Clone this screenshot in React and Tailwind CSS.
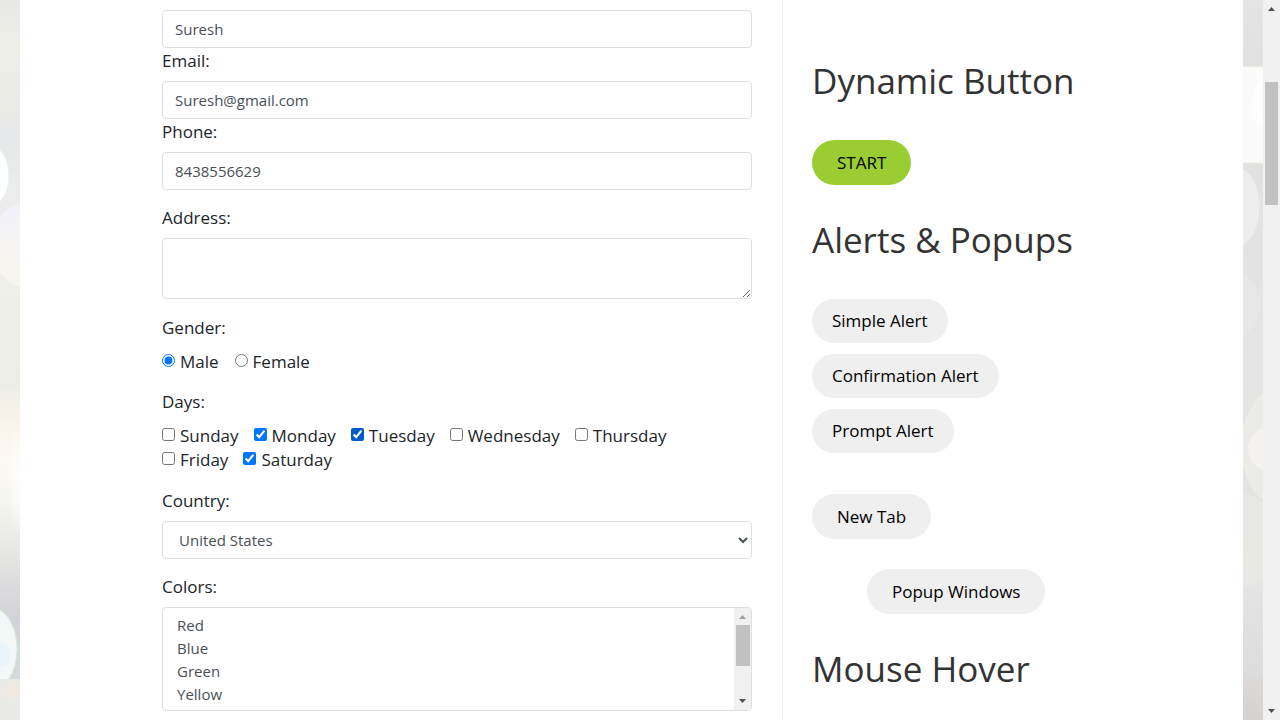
import React from "react";

const DAYS = [
  ["Sunday", false],
  ["Monday", true],
  ["Tuesday", true],
  ["Wednesday", false],
  ["Thursday", false],
  ["Friday", false],
  ["Saturday", true],
];

const COLORS = ["Red", "Blue", "Green", "Yellow", "Red"];

const control =
  "block w-full rounded border border-[#dcdfe3] bg-white text-[15px] text-[#495057] outline-none";
const pill = "rounded-full bg-[#efefef] text-[17px] leading-6 text-black";

function Label({ htmlFor, children }) {
  return (
    <label htmlFor={htmlFor} className="block pb-[7px] text-[17px] leading-[26px]">
      {children}
    </label>
  );
}

function TextField({ id, label, value, type = "text" }) {
  return (
    <div>
      <Label htmlFor={id}>{label}</Label>
      <input id={id} type={type} defaultValue={value} className={`${control} h-[38px] px-3`} />
    </div>
  );
}

function Choice({ type, name, label, checked }) {
  return (
    <label className="flex items-center gap-[5px] text-[17px] leading-6">
      <input
        type={type}
        name={name}
        defaultChecked={checked}
        className={`mb-[3px] size-[13px] ${label === "Tuesday" ? "accent-[#005cc8]" : "accent-[#0075ff]"}`}
      />
      {label}
    </label>
  );
}

function Arrow({ down, color }) {
  return (
    <svg viewBox="0 0 7 4" className={`h-1 w-[7px] ${down ? "rotate-180" : ""}`} aria-hidden="true">
      <path d="M3.5 0 7 4H0Z" fill={color} />
    </svg>
  );
}

function Heading({ children }) {
  return (
    <h2 className="text-[35px] leading-[42px] font-normal text-[#333333]">{children}</h2>
  );
}

function LeftBackdrop() {
  return (
    <svg className="h-full w-5 shrink-0" viewBox="0 0 20 720" preserveAspectRatio="none" aria-hidden="true">
      <defs>
        <linearGradient id="lbase" x1="0" y1="0" x2="0" y2="1">
          <stop offset="0" stopColor="#e7e8e4" />
          <stop offset="0.06" stopColor="#eeefe9" />
          <stop offset="0.15" stopColor="#eaebe6" />
          <stop offset="0.18" stopColor="#e6e7e8" />
          <stop offset="0.26" stopColor="#ebecec" />
          <stop offset="0.4" stopColor="#f0f0ea" />
          <stop offset="0.53" stopColor="#ecede7" />
          <stop offset="0.59" stopColor="#fbf4ea" />
          <stop offset="0.64" stopColor="#fcf9f2" />
          <stop offset="0.7" stopColor="#f4f5ef" />
          <stop offset="0.76" stopColor="#e8e9e5" />
          <stop offset="0.81" stopColor="#dcdcdd" />
          <stop offset="0.86" stopColor="#d2d3d8" />
          <stop offset="0.94" stopColor="#d5dadf" />
        </linearGradient>
        <linearGradient id="lorb" x1="0" y1="0" x2="0" y2="1">
          <stop offset="0" stopColor="#f0f0fa" />
          <stop offset="0.5" stopColor="#f6f5f2" />
          <stop offset="1" stopColor="#f8f5ee" />
        </linearGradient>
        <radialGradient id="lcorner">
          <stop offset="0" stopColor="#fffffc" />
          <stop offset="1" stopColor="#fffffc" stopOpacity="0" />
        </radialGradient>
        <filter id="lsoft" x="-50%" y="-20%" width="200%" height="140%">
          <feGaussianBlur stdDeviation="0.7" />
        </filter>
      </defs>
      <rect width="20" height="720" fill="url(#lbase)" />
      <ellipse cx="22" cy="480" rx="16" ry="60" fill="url(#lcorner)" />
      <g filter="url(#lsoft)">
        <ellipse cx="25" cy="245" rx="33" ry="42" fill="url(#lorb)" />
        <ellipse cx="-14" cy="176" rx="23" ry="33" fill="#ffffff" stroke="#e5f4e4" />
        <ellipse cx="-8" cy="649" rx="25" ry="41" fill="#f4f7f8" stroke="#d3efd5" />
        <ellipse cx="2" cy="655" rx="8" ry="12" fill="#e9f4fb" />
      </g>
      <rect y="679" width="20" height="41" fill="#e9eae6" />
      <ellipse cx="12" cy="690" rx="8" ry="9" fill="#efe9e1" filter="url(#lsoft)" />
    </svg>
  );
}

function RightBackdrop() {
  return (
    <svg className="h-full w-5 shrink-0" viewBox="0 0 20 720" preserveAspectRatio="none" aria-hidden="true">
      <defs>
        <linearGradient id="rbase" x1="0" y1="0" x2="0" y2="1">
          <stop offset="0" stopColor="#e4e4e4" />
          <stop offset="0.09" stopColor="#e1e1e1" />
          <stop offset="0.3" stopColor="#e2e2e2" />
          <stop offset="0.5" stopColor="#e5e5e5" />
          <stop offset="0.65" stopColor="#e3e4e1" />
          <stop offset="0.8" stopColor="#e5e5e5" />
          <stop offset="0.94" stopColor="#dcdcdc" />
        </linearGradient>
        <linearGradient id="rfoot" x1="0" y1="0" x2="0" y2="1">
          <stop offset="0" stopColor="#dcd8d6" />
          <stop offset="1" stopColor="#d3d2d1" />
        </linearGradient>
        <filter id="rsoft" x="-50%" y="-20%" width="200%" height="140%">
          <feGaussianBlur stdDeviation="0.7" />
        </filter>
      </defs>
      <rect width="20" height="720" fill="url(#rbase)" />
      <g filter="url(#rsoft)">
        <path d="M-4 67H24V163L-4 162Z" fill="#fafbfa" stroke="#f3f7e8" />
        <ellipse cx="26" cy="102" rx="17" ry="25" fill="#fdfefe" />
        <ellipse cx="-8" cy="207" rx="24" ry="40" fill="#ededee" stroke="#eeeee3" />
        <ellipse cx="-8" cy="305" rx="24" ry="32" fill="#e6e8e8" stroke="#e9e9e2" />
        <ellipse cx="32" cy="447" rx="33" ry="56" fill="#ebebe7" stroke="#efeee4" />
        <ellipse cx="27" cy="449" rx="22" ry="22" fill="#f4f3f1" />
        <ellipse cx="2" cy="540" rx="28" ry="46" fill="#e8e9e4" opacity="0.8" />
      </g>
      <rect y="679" width="20" height="41" fill="url(#rfoot)" />
    </svg>
  );
}

function PageScrollbar() {
  return (
    <div className="flex h-full w-[17px] shrink-0 flex-col items-center justify-between bg-[#f1f1f1] py-[7px]" aria-hidden="true">
      <Arrow color="#505050" />
      <div className="flex w-full flex-1 flex-col items-center pt-[71px]">
        <div className="h-[123px] w-[13px] bg-[#c1c1c1]" />
      </div>
      <Arrow down color="#505050" />
    </div>
  );
}

export default function App() {
  return (
    <div className="flex h-screen overflow-hidden bg-white font-['Open_Sans','Noto_Sans',sans-serif] text-[#212529]">
      <LeftBackdrop />
      <main className="grid min-w-0 flex-1 grid-cols-[762fr_461fr] overflow-hidden bg-white">
        <form className="pt-[10px] pr-[30px] pl-[142px]">
          <input aria-label="Name" type="text" defaultValue="Suresh" className={`${control} h-[38px] px-3`} />
          <TextField id="email" label="Email:" value="Suresh@gmail.com" type="email" />
          <TextField id="phone" label="Phone:" value="8438556629" type="tel" />

          <div className="mt-[15px]">
            <Label htmlFor="address">Address:</Label>
            <textarea id="address" className={`${control} h-[61px] resize-y px-3 py-1.5`} />
          </div>

          <fieldset className="mt-4">
            <legend className="text-[17px] leading-[26px]">Gender:</legend>
            <div className="flex flex-wrap gap-x-4 pt-[9px]">
              <Choice type="radio" name="gender" label="Male" checked />
              <Choice type="radio" name="gender" label="Female" />
            </div>
          </fieldset>

          <fieldset className="mt-[15px]">
            <legend className="text-[17px] leading-[26px]">Days:</legend>
            <div className="flex flex-wrap gap-x-[15px] pt-[9px] pr-4">
              {DAYS.map(([day, on]) => (
                <Choice key={day} type="checkbox" name="days" label={day} checked={on} />
              ))}
            </div>
          </fieldset>

          <div className="mt-4">
            <Label htmlFor="country">Country:</Label>
            <select id="country" className={`${control} h-[38px] px-3`}>
              <option>United States</option>
            </select>
          </div>

          <div className="mt-[15px]">
            <Label htmlFor="colors">Colors:</Label>
            <div className="flex h-[104px] overflow-hidden rounded border border-[#dcdfe3]">
              <select
                id="colors"
                multiple
                className="h-full min-w-0 flex-1 overflow-hidden px-3 py-[7px] text-[15px] text-[#495057] outline-none"
              >
                {COLORS.map((color, i) => (
                  <option key={i} className="min-h-[23px] px-0.5 py-0 leading-[23px]">
                    {color}
                  </option>
                ))}
              </select>
              <div className="flex w-[17px] flex-col items-center bg-[#f1f1f1] py-[7px]" aria-hidden="true">
                <Arrow color="#a3a3a3" />
                <div className="flex w-full flex-1 flex-col items-center pt-1.5">
                  <div className="h-[41px] w-[14px] bg-[#c1c1c1]" />
                </div>
                <Arrow down color="#505050" />
              </div>
            </div>
          </div>
        </form>

        <aside className="flex flex-col items-start border-l border-[#eeeeee] pt-[60px] pl-[29px]">
          <Heading>Dynamic Button</Heading>
          <button type="button" className="mt-[38px] h-[45px] rounded-full bg-[#9acd32] px-[25px] text-[17px] leading-6 text-black">
            START
          </button>
          <div className="mt-[34px]">
            <Heading>Alerts &amp; Popups</Heading>
          </div>
          <div className="mt-[38px] flex flex-col items-start gap-[11px]">
            <button type="button" className={`${pill} h-11 px-5`}>Simple Alert</button>
            <button type="button" className={`${pill} h-11 px-5`}>Confirmation Alert</button>
            <button type="button" className={`${pill} h-11 px-5`}>Prompt Alert</button>
          </div>
          <button type="button" className={`${pill} mt-[41px] h-[45px] px-[25px]`}>New Tab</button>
          <button type="button" className={`${pill} mt-[30px] ml-[55px] h-[45px] px-[25px]`}>Popup Windows</button>
          <div className="mt-[34px]">
            <Heading>Mouse Hover</Heading>
          </div>
        </aside>
      </main>
      <RightBackdrop />
      <PageScrollbar />
    </div>
  );
}
